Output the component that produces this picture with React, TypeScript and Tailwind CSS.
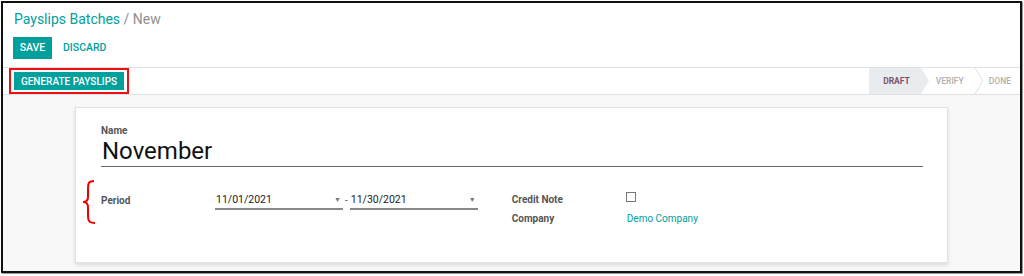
import React from "react";

export default function App() {
  const teal = "text-[#00a09d]";
  return (
    <div className="w-[1024px] h-[276px] bg-white relative" style={{ fontFamily: "Roboto, 'Liberation Sans', sans-serif" }}>
      <div className="absolute left-[1px] top-[1px] w-[1021px] h-[272px] border-2 border-[#111] shadow-[1px_1px_0_#999] flex flex-col bg-white overflow-hidden">
        {/* control panel */}
        <div className="pl-[11px] pt-[8px] h-[64px] flex flex-col">
          <div className="text-[14px] leading-[17px]">
            <span className={teal}>Payslips Batches</span>
            <span className="text-[#8f8f8f]"> / New</span>
          </div>
          <div className="mt-[9px] flex items-center gap-[11px]">
            <div className="h-[22px] w-[39px] bg-[#00a09d] text-white text-[10.5px] font-medium flex items-center justify-center -ml-[1px]">SAVE</div>
            <div className={`text-[10.5px] font-medium ${teal}`}>DISCARD</div>
          </div>
        </div>
        {/* status bar */}
        <div className="h-[28px] border-t border-b border-[#dee2e6] flex items-center justify-between">
          <div className="ml-[6px] border-2 border-[#ee1111] px-[3px] py-[2px]">
            <div className="h-[18px] w-[110px] bg-[#00a09d] text-white text-[10px] font-medium flex items-center justify-center">GENERATE PAYSLIPS</div>
          </div>
          <div className="flex items-stretch h-full text-[8.5px] font-medium mr-[2px]">
            <div className="relative bg-[#e9ecef] text-[#7a5470] flex items-center pl-[14px] pr-[11px] font-bold">
              DRAFT
              <svg className="absolute -right-[8px] top-0 h-full w-[8px]" viewBox="0 0 8 26" preserveAspectRatio="none">
                <path d="M0 0 L8 13 L0 26 Z" fill="#e9ecef" />
              </svg>
            </div>
            <div className="relative text-[#b0b0b0] flex items-center pl-[15px] pr-[11px]">
              VERIFY
              <svg className="absolute -right-[8px] top-0 h-full w-[8px]" viewBox="0 0 8 26" preserveAspectRatio="none">
                <path d="M0 0 L8 13 L0 26" fill="none" stroke="#dee2e6" strokeWidth="1" />
              </svg>
            </div>
            <div className="text-[#b0b0b0] flex items-center pl-[14px] pr-[7px]">DONE</div>
          </div>
        </div>
        {/* content */}
        <div className="flex-1 bg-[#f8f8f8] pt-[12px] pl-[72px] relative">
          <div className="w-[873px] h-[156px] bg-white border border-[#e2e2e2] shadow-[0_2px_4px_rgba(0,0,0,0.12)] pl-[25px] pr-[24px] pt-[17px]">
            <div className="text-[10px] font-bold text-[#555] leading-[12px]">Name</div>
            <div className="text-[24px] leading-[26px] text-[#111] border-b border-[#666] pb-[2px] mt-[1px] pl-[1px]">November</div>
            <div className="flex mt-[25px]">
              <div className="w-[114px] text-[10px] font-bold text-[#555] leading-[14px] pt-[2px]">Period</div>
              <div className="flex items-start">
                <div className="w-[128px] h-[18px] border-b-2 border-[#888] flex items-center justify-between pl-[1px] pr-[2px] text-[10.5px] text-[#222]">
                  11/01/2021
                  <span className="text-[7px] text-[#777]">▼</span>
                </div>
                <span className="text-[10px] text-[#555] mx-[2px] leading-[18px]">-</span>
                <div className="w-[128px] h-[18px] border-b-2 border-[#888] flex items-center justify-between pl-[1px] pr-[2px] text-[10.5px] text-[#222]">
                  11/30/2021
                  <span className="text-[7px] text-[#777]">▼</span>
                </div>
              </div>
              <div className="ml-[34px] flex flex-col gap-[5px]">
                <div className="flex items-center h-[14px]">
                  <div className="w-[114px] text-[10px] font-bold text-[#555]">Credit Note</div>
                  <div className="w-[10px] h-[10px] border border-[#777] bg-white -mt-[4px]"></div>
                </div>
                <div className="flex items-center h-[14px]">
                  <div className="w-[115px] text-[10px] font-bold text-[#555]">Company</div>
                  <div className={`text-[10px] ${teal}`}>Demo Company</div>
                </div>
              </div>
            </div>
          </div>
          {/* red brace annotation */}
          <svg className="absolute left-[78px] top-[84px]" width="16" height="46" viewBox="0 0 16 46">
            <path d="M13 2 C7 2 7 5 7 11 L7 18 C7 21 5 23 2 23 C5 23 7 25 7 28 L7 36 C7 42 8 44 14 44" fill="none" stroke="#e00" strokeWidth="2" />
          </svg>
        </div>
      </div>
    </div>
  );
}
